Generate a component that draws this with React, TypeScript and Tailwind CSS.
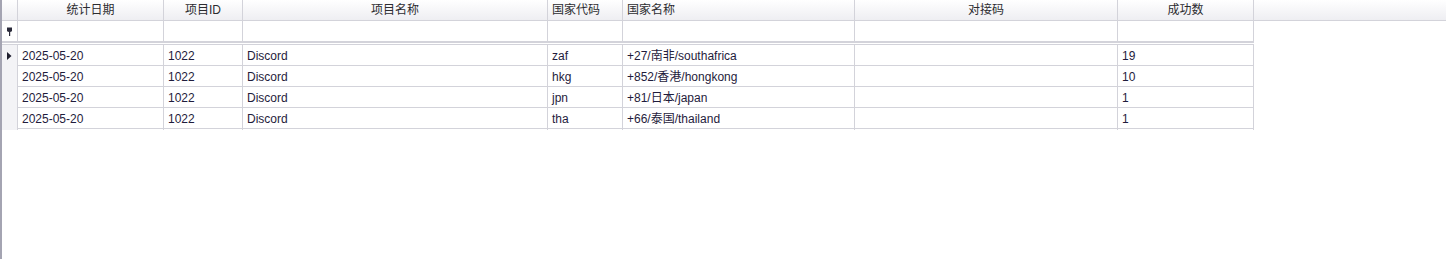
const COLS = 'grid-cols-[16px_146px_79px_305px_75px_232px_263px_136px]'

const rows = [
  { date: '2025-05-20', id: '1022', name: 'Discord', code: 'zaf', country: '+27/南非/southafrica', dock: '', ok: '19' },
  { date: '2025-05-20', id: '1022', name: 'Discord', code: 'hkg', country: '+852/香港/hongkong', dock: '', ok: '10' },
  { date: '2025-05-20', id: '1022', name: 'Discord', code: 'jpn', country: '+81/日本/japan', dock: '', ok: '1' },
  { date: '2025-05-20', id: '1022', name: 'Discord', code: 'tha', country: '+66/泰国/thailand', dock: '', ok: '1' },
]

const headers: { label: string; align: string }[] = [
  { label: '统计日期', align: 'text-center' },
  { label: '项目ID', align: 'text-center' },
  { label: '项目名称', align: 'text-center' },
  { label: '国家代码', align: 'text-left pl-[4px]' },
  { label: '国家名称', align: 'text-left pl-[4px]' },
  { label: '对接码', align: 'text-center' },
  { label: '成功数', align: 'text-center' },
]

function PinIcon() {
  return (
    <svg width="7" height="9" viewBox="0 0 7 9">
      <path d="M1 0.5 H6 V3.5 Q6 5 3.5 5 Q1 5 1 3.5 Z" fill="#2a2a3a" />
      <rect x="3" y="4.5" width="1.2" height="4.5" fill="#2a2a3a" />
    </svg>
  )
}

function RowArrow() {
  return (
    <svg width="5" height="8" viewBox="0 0 5 8">
      <path d="M0 0 L4.5 4 L0 8 Z" fill="#1f1f2e" />
    </svg>
  )
}

export default function App() {
  const font = { fontFamily: '"Liberation Sans", "Noto Sans CJK SC", sans-serif' }
  return (
    <div className="flex h-[259px] w-[1446px] bg-white text-[12px]" style={font}>
      <div className="w-[2px] shrink-0 bg-[#a4a4b2]" />
      <div className="flex flex-1 flex-col">
        {/* header */}
        <div className="flex h-[21px] border-b border-[#d3d3da] bg-gradient-to-b from-[#ffffff] to-[#eeeef2] text-[#2c2c30]">
          <div className={`grid ${COLS}`}>
            <div className="border-r border-[#d3d3da]" />
            {headers.map((h) => (
              <div key={h.label} className={`border-r border-[#d3d3da] leading-[21px] ${h.align}`}>
                {h.label}
              </div>
            ))}
          </div>
          <div className="flex-1" />
        </div>

        {/* filter row */}
        <div className={`grid w-max ${COLS} h-[22px] border-b-2 border-[#d3d3da]`}>
          <div className="flex items-center justify-center border-r border-[#d3d3da] bg-white">
            <PinIcon />
          </div>
          {headers.map((h) => (
            <div key={h.label} className="border-r border-[#d3d3da]" />
          ))}
        </div>
        <div className="h-[1px]" />

        {/* data */}
        <div className="w-max border-t border-[#d3d3da] text-[#1f1c3c]">
          {rows.map((r, i) => (
            <div key={r.code} className={`grid ${COLS} h-[21px] border-b border-[#d3d3da] leading-[22px]`}>
              <div className="flex items-center justify-center border-r border-[#d3d3da] bg-[#f3f3f6]">
                {i === 0 && <RowArrow />}
              </div>
              <div className="border-r border-[#d3d3da] pl-[4px]">{r.date}</div>
              <div className="border-r border-[#d3d3da] pl-[4px]">{r.id}</div>
              <div className="border-r border-[#d3d3da] pl-[4px]">{r.name}</div>
              <div className="border-r border-[#d3d3da] pl-[4px]">{r.code}</div>
              <div className="border-r border-[#d3d3da] pl-[4px]">{r.country}</div>
              <div className="border-r border-[#d3d3da] pl-[4px]">{r.dock}</div>
              <div className="border-r border-[#d3d3da] pl-[4px]">{r.ok}</div>
            </div>
          ))}
        </div>
      </div>
    </div>
  )
}
